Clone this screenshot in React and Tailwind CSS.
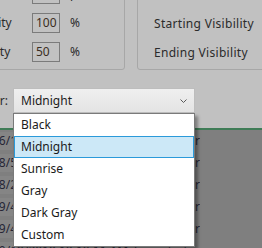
import React from "react";

const items = ["Black", "Midnight", "Sunrise", "Gray", "Dark Gray", "Custom"];

const rows = [
  ["06/18/2019 09:12:40 AM", "Administrator"],
  ["08/5/2019 11:03:12 AM", "Administrator"],
  ["08/22/2019 02:45:09 PM", "Administrator"],
  ["09/4/2019 10:10:11 AM", "Administrator"],
  ["09/4/2019 10:12:54 AM", "Administrator"],
  ["10/10/2019 10:10:11 AM", "Administrator"],
];

function Field({ label, value, unit, shift = "" }) {
  return (
    <div className="flex items-center h-[20px]">
      <span className={"w-[141px] shrink-0 whitespace-nowrap " + shift}>{label}</span>
      <div className="w-[28px] h-[20px] shrink-0 border border-[#7b7b7b] flex items-center px-[3px] text-[#3a2e22]">
        {value}
      </div>
      <span className="ml-[10px] whitespace-nowrap">{unit}</span>
    </div>
  );
}

export default function App() {
  return (
    <div
      className="w-[262px] h-[248px] overflow-hidden relative bg-[#c1c1c1] text-[12px] text-[#2b2b2b]"
      style={{ fontFamily: '"Noto Sans", "Open Sans", sans-serif' }}
    >
      <div className="h-[128px] flex flex-col">
        <div className="flex gap-[12px] -mt-[50px]">
          <div className="-ml-[110px] w-[235px] h-[120px] shrink-0 border border-[#a7a7a7] rounded-[3px] pt-[33px] flex flex-col gap-[9px]">
            <Field label="Line Thickness" value="" unit="pixels" shift="pl-[30px]" />
            <Field label="Starting Opacity" value="100" unit="%" shift="pl-[30px]" />
            <Field label="Ending Opacity" value="50" unit="%" shift="pl-[34px]" />
          </div>
          <div className="w-[160px] h-[120px] shrink-0 border border-[#a7a7a7] rounded-[3px] pt-[34px] pl-[16px] flex flex-col gap-[9px] tracking-[0.3px]">
            <div className="h-[20px] flex items-center whitespace-nowrap">Line Thickness</div>
            <div className="h-[20px] flex items-center whitespace-nowrap">Starting Visibility</div>
            <div className="h-[20px] flex items-center whitespace-nowrap">Ending Visibility</div>
          </div>
        </div>
        <div className="flex items-center mt-[18px]">
          <div className="w-[13px] shrink-0 flex justify-end">
            <span className="whitespace-nowrap pr-[5px]">Color:</span>
          </div>
          <div className="w-[182px] h-[25px] shrink-0 bg-gradient-to-b from-[#efefef] to-[#e4e4e4] border border-[#bdbdbd] flex items-center justify-between pl-[7px] pr-[7px] text-[#1b1b1b]">
            <span>Midnight</span>
            <svg width="7" height="4" viewBox="0 0 7 4" fill="none">
              <path d="M0.5 0.5 L3.5 3.5 L6.5 0.5" stroke="#5a5a5a" strokeWidth="1" />
            </svg>
          </div>
        </div>
      </div>

      <div className="border-t-2 border-[#3f7c57] bg-[#7f7f7f] h-[120px] text-[#252535]">
        {rows.map(([d, u], i) => (
          <div key={i} className="h-[22px] flex items-center whitespace-nowrap">
            <span className="-ml-[8px] w-[130px] shrink-0 bg-[#858585]">{d}</span>
            <span className="w-[78px] shrink-0 text-right overflow-hidden">{u}</span>
          </div>
        ))}
      </div>

      <div className="absolute left-[13px] top-[113px] w-[182px] bg-white border border-[#7a7a7a] shadow-[3px_3px_3px_rgba(0,0,0,0.35)] text-[#1b1b1b]">
        {items.map((it) => (
          <div
            key={it}
            className={
              it === "Midnight"
                ? "h-[22px] flex items-center pl-[6px] bg-[#cce8f7] border border-[#2b9ada]"
                : "h-[22px] flex items-center pl-[7px]"
            }
          >
            {it}
          </div>
        ))}
      </div>
    </div>
  );
}
